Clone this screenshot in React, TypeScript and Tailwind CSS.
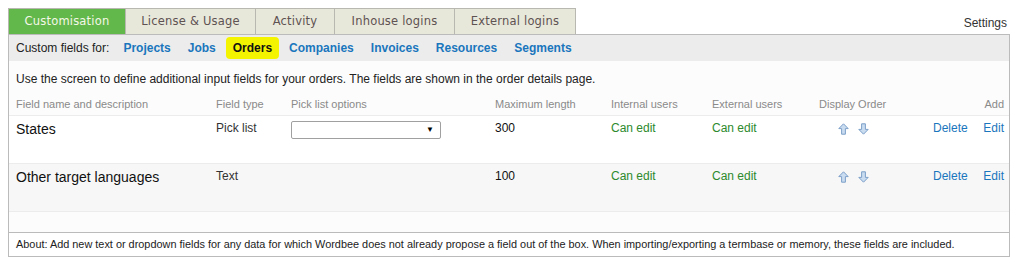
const tabs = ["Customisation", "License & Usage", "Activity", "Inhouse logins", "External logins"];
const tabWidths = ["w-[118px]", "w-[131px]", "w-[80px]", "w-[121px]", "w-[122px]"];
const links = ["Projects", "Jobs", "Orders", "Companies", "Invoices", "Resources", "Segments"];

const cols = ["w-[200px]", "w-[75px]", "w-[204px]", "w-[116px]", "w-[101px]", "w-[107px]", "w-[114px]", "w-[49px]", "w-[22px]"];

const Arrow = ({ down }: { down?: boolean }) => (
  <svg width="11" height="12" viewBox="0 0 11 12" className={down ? "rotate-180" : ""}>
    <path d="M5.5 0.8 L10.2 5.6 L7.4 5.6 L7.4 11.2 L3.6 11.2 L3.6 5.6 L0.8 5.6 Z" fill="#c9dcf0" stroke="#7d9fc8" strokeWidth="1" strokeLinejoin="round" />
  </svg>
);

const rows = [
  { name: "States", type: "Pick list", pick: true, max: "300", bg: "bg-white" },
  { name: "Other target languages", type: "Text", pick: false, max: "100", bg: "bg-[#f7f7f7]" },
];

export default function App() {
  return (
    <div className="w-[1017px] h-[265px] bg-white pt-[8px] font-['Liberation_Sans',Arial,sans-serif] text-[#222]">
      <div className="flex items-end pl-[8px] pr-[9px]">
        {tabs.map((t, i) => (
          <div
            key={t}
            className={`${tabWidths[i]} h-[26px] -mr-px flex items-center justify-center border border-b-0 font-['DejaVu_Sans',Verdana,sans-serif] text-[11.5px] tracking-[0.2px] ${
              i === 0
                ? "bg-[#62b84a] border-[#b8b8b0] text-[#f4f7e8]"
                : "bg-[#e8e8da] border-[#b8b8b0] text-[#5e5252]"
            }`}
          >
            {t}
          </div>
        ))}
        <div className="flex-1 text-right text-[12px] text-[#333] pb-[2px] pr-[1px]">Settings</div>
      </div>

      <div className="mx-[8px] w-[1002px] border border-[#bbb] bg-[#fcfcfc]">
        <div className="h-[26px] bg-[#ececec] flex items-center pl-[7px] gap-[17px] text-[12px]">
          <span className="text-[#222] mr-[-3px]">Custom fields for:</span>
          {links.map((l) =>
            l === "Orders" ? (
              <span key={l} className="font-bold text-[#111] bg-[#f4f400] rounded-[4px] px-[7px] -mx-[7px] py-[2px]">
                {l}
              </span>
            ) : (
              <span key={l} className="font-bold text-[#1a76bd]">
                {l}
              </span>
            )
          )}
        </div>

        <div className="pt-[11px] pl-[7px] text-[12px] leading-[14px] text-[#222]">
          Use the screen to define additional input fields for your orders. The fields are shown in the order details page.
        </div>

        <div className="flex items-end pl-[7px] h-[30px] pb-[4px] text-[11px] leading-[13px] text-[#8a8a8a] border-b border-[#ececec]">
          <div className={cols[0]}>Field name and description</div>
          <div className={cols[1]}>Field type</div>
          <div className={cols[2]}>Pick list options</div>
          <div className={cols[3]}>Maximum length</div>
          <div className={cols[4]}>Internal users</div>
          <div className={cols[5]}>External users</div>
          <div className={cols[6]}>Display Order</div>
          <div className={cols[7]}></div>
          <div className={`${cols[8]} text-right`}>Add</div>
        </div>

        {rows.map((r) => (
          <div key={r.name} className={`flex h-[48px] pl-[7px] pt-[5px] border-b border-[#ececec] text-[12px] leading-[14px] ${r.bg}`}>
            <div className={`${cols[0]} text-[14px] leading-[17px] text-[#111]`}>{r.name}</div>
            <div className={`${cols[1]} text-[#333]`}>{r.type}</div>
            <div className={cols[2]}>
              {r.pick && (
                <div className="w-[150px] h-[18px] border border-[#a0a0a0] rounded-[2px] bg-white flex items-center justify-end pr-[6px] text-[8px] text-black">
                  ▼
                </div>
              )}
            </div>
            <div className={`${cols[3]} text-[#111]`}>{r.max}</div>
            <div className={`${cols[4]} text-[#2d8a2d]`}>Can edit</div>
            <div className={`${cols[5]} text-[#2d8a2d]`}>Can edit</div>
            <div className={`${cols[6]} flex gap-[9px] pl-[19px] pt-[2px]`}>
              <Arrow />
              <Arrow down />
            </div>
            <div className={`${cols[7]} text-[#1a76bd]`}>Delete</div>
            <div className={`${cols[8]} text-right text-[#1a76bd]`}>Edit</div>
          </div>
        ))}

        <div className="h-[20px]"></div>

        <div className="h-[24px] border-t border-[#bbb] bg-white flex items-center pl-[7px] text-[10.9px] text-[#222]">
          About: Add new text or dropdown fields for any data for which Wordbee does not already propose a field out of the box. When importing/exporting a termbase or memory, these fields are included.
        </div>
      </div>
    </div>
  );
}
